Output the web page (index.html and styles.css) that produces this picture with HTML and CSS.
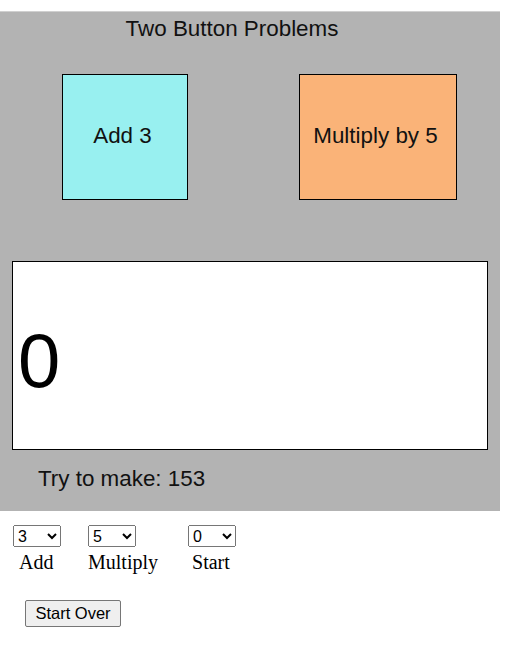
FILE: index.html
```html
<!DOCTYPE html>
<html>
<head>
<meta charset="utf-8">
<link rel="stylesheet" href="styles.css">
</head>
<body>
<div class="panel">
  <div class="title">Two Button Problems</div>
  <div class="buttons">
    <div class="op op-add">Add 3</div>
    <div class="op op-mul">Multiply by 5</div>
  </div>
  <div class="display"><span class="value">0</span></div>
  <div class="goal">Try to make: 153</div>
</div>
<div class="controls">
  <div class="ctl ctl-add">
    <select class="sel"><option>3</option></select>
    <span class="lbl">Add</span>
  </div>
  <div class="ctl ctl-mul">
    <select class="sel"><option>5</option></select>
    <span class="lbl">Multiply</span>
  </div>
  <div class="ctl ctl-start">
    <select class="sel"><option>0</option></select>
    <span class="lbl">Start</span>
  </div>
</div>
<div class="reset-row"><button class="reset">Start Over</button></div>
</body>
</html>
```

FILE: styles.css
```css
html, body {
  margin: 0;
  padding: 0;
  background: #ffffff;
}
body {
  font-family: "Liberation Sans", Arial, sans-serif;
  color: #000;
}
.panel {
  margin-top: 11px;
  width: 500px;
  height: 500px;
  box-sizing: border-box;
  background: #b3b3b3;
  border-top: 1px solid #d0d0d0;
  display: flex;
  flex-direction: column;
}
.title {
  font-size: 22.4px;
  line-height: 26px;
  padding-top: 4px;
  width: 464px;
  text-align: center;
  color: #111;
}
.buttons {
  display: flex;
  margin-top: 32px;
  height: 126px;
}
.op {
  box-sizing: border-box;
  height: 126px;
  border: 1px solid #000;
  display: flex;
  align-items: center;
  justify-content: center;
  padding-right: 5px;
  padding-bottom: 2px;
  font-size: 22.4px;
  color: #111;
}
.op-add {
  margin-left: 62px;
  width: 126px;
  background: #98f0f0;
}
.op-mul {
  margin-left: 111px;
  width: 158px;
  background: #fab378;
}
.display {
  box-sizing: border-box;
  margin-top: 61px;
  margin-left: 12px;
  width: 476px;
  height: 189px;
  background: #fff;
  border: 1px solid #000;
  display: flex;
  align-items: center;
  padding-left: 5px;
  padding-top: 11px;
}
.value {
  font-size: 76px;
  line-height: 1;
}
.goal {
  margin-top: 16px;
  margin-left: 38px;
  font-size: 22.4px;
  line-height: 26px;
  color: #111;
}
.controls {
  display: flex;
  margin-top: 14px;
  margin-left: 13px;
}
.ctl {
  display: flex;
  flex-direction: column;
  align-items: flex-start;
}
.sel {
  width: 48px;
  height: 22px;
  font-family: "Liberation Sans", Arial, sans-serif;
  font-size: 16px;
  margin: 0;
}
.lbl {
  font-family: "Liberation Serif", "Times New Roman", serif;
  font-size: 20px;
  line-height: 23px;
  margin-top: 4px;
}
.ctl-add .lbl { margin-left: 6px; }
.ctl-mul { margin-left: 27px; }
.ctl-start { margin-left: 30px; }
.ctl-start .lbl { margin-left: 4px; }
.reset-row {
  margin-top: 26px;
  margin-left: 25px;
}
.reset {
  width: 96px;
  height: 27px;
  font-family: "Liberation Sans", Arial, sans-serif;
  font-size: 16.5px;
  background: #efefef;
  border: 1px solid #767676;
  border-radius: 2px;
  padding: 0;
  color: #000;
}
```
